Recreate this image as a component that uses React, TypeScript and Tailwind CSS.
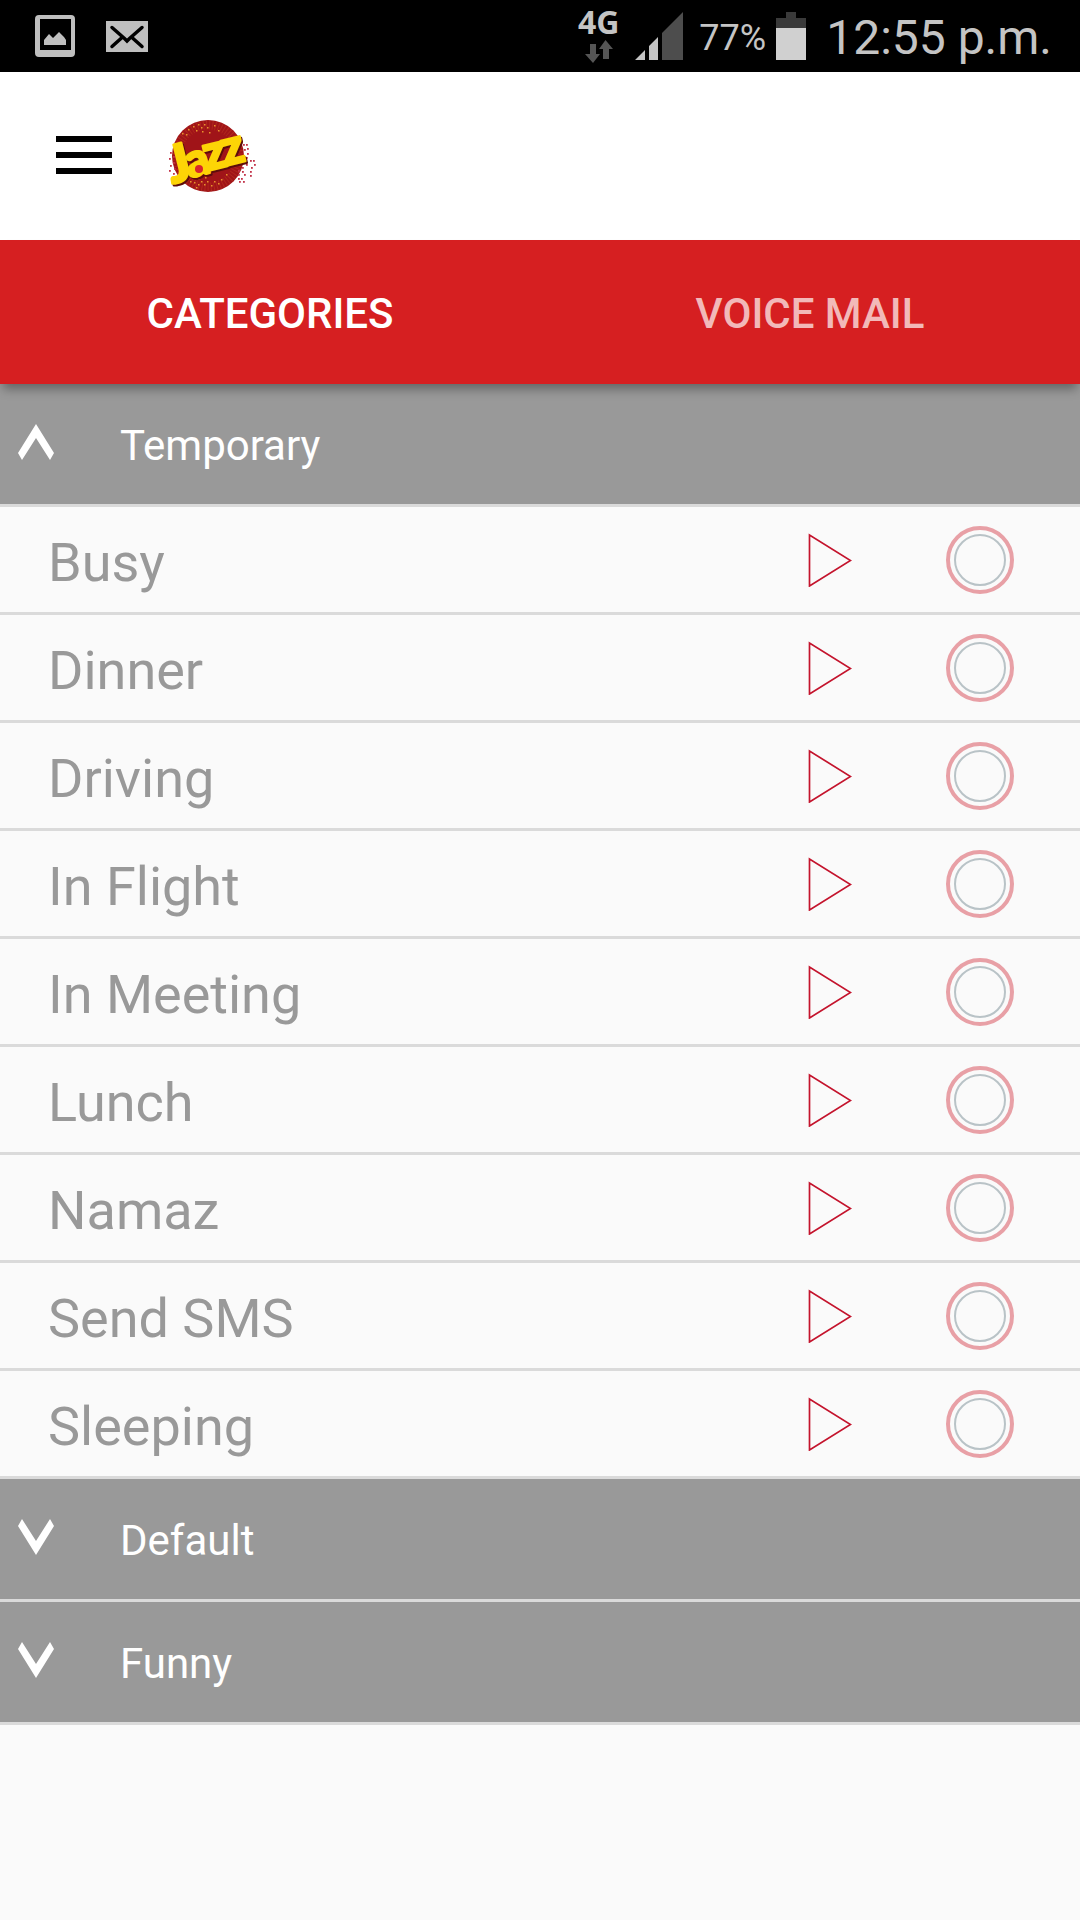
import { useState } from 'react';

const groups = [
  {
    id: 'temporary',
    name: 'Temporary',
    items: ['Busy', 'Dinner', 'Driving', 'In Flight', 'In Meeting', 'Lunch', 'Namaz', 'Send SMS', 'Sleeping'],
  },
  { id: 'default', name: 'Default', items: [] as string[] },
  { id: 'funny', name: 'Funny', items: [] as string[] },
];

const tabs = ['CATEGORIES', 'VOICE MAIL'];

// rows of small dots on the disc and to its sides
const goldDots = [
  [28, 17], [33, 14], [36, 18], [38, 12], [41, 15], [44, 12], [47, 15], [42, 19], [49, 20], [54, 13], [22, 21], [26, 22], [58, 18],
  [30, 69], [34, 70], [38, 66], [38, 72], [41, 69], [44, 72], [36, 75], [47, 69], [51, 73], [54, 69], [58, 71], [61, 67], [45, 65], [66, 62],
];
const redDots = [
  [10, 40], [13, 44], [9, 46], [13, 50], [10, 53], [14, 56], [9, 58], [13, 61],
  [83, 32], [86, 32], [87, 36], [84, 37], [87, 41], [86, 45], [90, 48], [93, 48], [86, 52], [82, 55], [91, 55], [94, 52],
  [78, 58], [78, 62], [82, 59], [90, 59], [78, 66], [81, 66], [84, 62], [79, 69], [90, 63], [83, 69],
];

const logoLetters = [
  { char: 'J', x: 12, y: 72, size: 52 },
  { char: 'a', x: 29, y: 66, size: 46 },
  { char: 'z', x: 47, y: 59, size: 49 },
  { char: 'z', x: 65, y: 54, size: 49 },
];

function StatusBar() {
  return (
    <div className="flex h-[72px] items-center justify-between bg-black pr-7 pl-[35px] text-[#c4c4c4]">
      <div className="flex items-center gap-[31px]">
        <svg className="h-[42px] w-10" viewBox="0 0 40 42" fill="#bfbfbf">
          <path fillRule="evenodd" d="M4 0h32a4 4 0 0 1 4 4v34a4 4 0 0 1-4 4H4a4 4 0 0 1-4-4V4a4 4 0 0 1 4-4zM5 4v31h31V4z" />
          <path d="M9 30v-5l5-6 4 4 6-6 5 5 2 3v5z" />
        </svg>
        <svg className="h-[31px] w-[42px]" viewBox="0 0 42 31" fill="none">
          <path fill="#bfbfbf" d="M0 0h42v31H0z" />
          <path d="M6 6.500l12.500 11 2.500 2.500 2.500-2.500L36 6.500M6 25.500l9.500-8.500M36 25.500L26.500 17" stroke="#000" strokeWidth="3.500" strokeLinecap="round" />
        </svg>
      </div>
      <div className="flex items-center">
        <div className="flex flex-col items-center pb-[2px]">
          <span className="font-['Open_Sans'] text-[32px] leading-7 font-bold">4G</span>
          <svg className="mt-1 h-[23px] w-7" viewBox="0 0 28 23" fill="#555">
            <path d="M5 4h6v10h4l-7 9-8-9h5zM18 19h6V9h4L20.500 0 14 9h4z" />
          </svg>
        </div>
        <svg className="ml-4 h-12 w-12" viewBox="0 0 48 48">
          <path fill="#c4c4c4" d="M0 48l10-10v10zM14 48V34l9-9v23z" />
          <path fill="#4d4d4d" d="M27 48V21L48 0v48z" />
        </svg>
        <span className="ml-4 pt-1 text-4xl">77%</span>
        <svg className="ml-[10px] h-12 w-[30px]" viewBox="0 0 30 48">
          <path fill="#3a3a3a" d="M10 0h10v6h10v10H0V6h10z" />
          <path fill="#d0d0d0" d="M0 16h30v32H0z" />
        </svg>
        <span className="ml-5 pt-1 text-5xl">12:55 p.m.</span>
      </div>
    </div>
  );
}

function JazzLogo() {
  return (
    <svg className="h-[88px] w-[100px] overflow-visible" viewBox="0 0 100 88" role="img" aria-label="Jazz">
      <circle cx="48" cy="44" r="36" fill="#a01418" />
      <circle cx="48" cy="44" r="31" fill="none" stroke="#bf3a22" strokeWidth="9" strokeDasharray="1 2" opacity="0.5" />
      {goldDots.map(([x, y]) => (
        <rect key={`${x}-${y}`} x={x} y={y} width="1.500" height="1.500" fill="#e8932c" />
      ))}
      {redDots.map(([x, y]) => (
        <rect key={`${x}-${y}`} x={x} y={y} width="1.800" height="1.800" fill="#c2334a" />
      ))}
      <g fontFamily="Lato" fontWeight="900" strokeLinejoin="round" strokeWidth="2.500">
        {logoLetters.map(({ char, x, y, size }) => (
          <text key={x} x={x + 1} y={y + 2} fontSize={size} transform={`rotate(-14 ${x} ${y})`} fill="#5c0d0b" stroke="#5c0d0b">
            {char}
          </text>
        ))}
        {logoLetters.map(({ char, x, y, size }) => (
          <text key={x} x={x} y={y} fontSize={size} transform={`rotate(-14 ${x} ${y})`} fill="#fdd406" stroke="#fdd406">
            {char}
          </text>
        ))}
      </g>
      <circle cx="39" cy="57" r="4" fill="#d8262b" />
    </svg>
  );
}

export default function App() {
  const [activeTab, setActiveTab] = useState('CATEGORIES');
  const [openGroup, setOpenGroup] = useState('temporary');
  const [selected, setSelected] = useState('');

  return (
    <div className="min-h-screen bg-[#fafafa] font-[Roboto,sans-serif]">
      <StatusBar />

      <header className="flex h-[168px] items-center bg-white pl-14">
        <button aria-label="Menu" className="mb-[2px] flex flex-col gap-[10px]">
          <span className="h-[6px] w-14 bg-black" />
          <span className="h-[6px] w-14 bg-black" />
          <span className="h-[6px] w-14 bg-black" />
        </button>
        <div className="ml-12">
          <JazzLogo />
        </div>
      </header>

      <nav className="relative flex h-36 bg-[#d61f21] shadow-[0_8px_10px_-3px_rgba(0,0,0,0.35)]">
        {tabs.map((tab) => (
          <button
            key={tab}
            onClick={() => setActiveTab(tab)}
            className={`flex-1 pt-[2px] text-[42px] font-medium ${activeTab === tab ? 'text-white' : 'text-white/70'}`}
          >
            {tab}
          </button>
        ))}
      </nav>

      <main>
        {groups.map((group) => (
          <section key={group.id}>
            <button
              onClick={() => setOpenGroup(openGroup === group.id ? '' : group.id)}
              aria-expanded={openGroup === group.id}
              className="flex h-[123px] w-full items-center border-b-3 border-[#dadada] bg-[#999] pl-[18px] text-[42px] text-white"
            >
              <svg
                className={`mb-1 h-9 w-9 ${openGroup === group.id ? '' : 'rotate-180'}`}
                viewBox="0 0 36 36"
                fill="currentColor"
              >
                <path d="M18 0l18 29-4 7-14-22L4 36l-4-7z" />
              </svg>
              <span className="ml-[66px] pt-[2px]">{group.name}</span>
            </button>

            {openGroup === group.id && (
              <ul>
                {group.items.map((item) => (
                  <li key={item} className="flex h-[108px] items-center border-b-3 border-[#dadada] pr-[66px] pl-12">
                    <label htmlFor={item} className="flex-1 pt-[6px] text-[54px] text-[#999]">
                      {item}
                    </label>
                    <button aria-label={`Play ${item}`} className="mr-[94px]">
                      <svg className="h-[54px] w-11" viewBox="0 0 44 54" fill="none">
                        <path d="M1.500 2v51l41-25.500z" stroke="#c4142d" strokeWidth="1.700" />
                      </svg>
                    </button>
                    <span className="flex size-[68px] items-center justify-center rounded-full border-4 border-[#e8a0a6]">
                      <input
                        type="radio"
                        id={item}
                        name="status"
                        checked={selected === item}
                        onChange={() => setSelected(item)}
                        className="size-[52px] appearance-none rounded-full border-2 border-[#b9c3c7] checked:bg-[#d61f21]"
                      />
                    </span>
                  </li>
                ))}
              </ul>
            )}
          </section>
        ))}
      </main>
    </div>
  );
}
